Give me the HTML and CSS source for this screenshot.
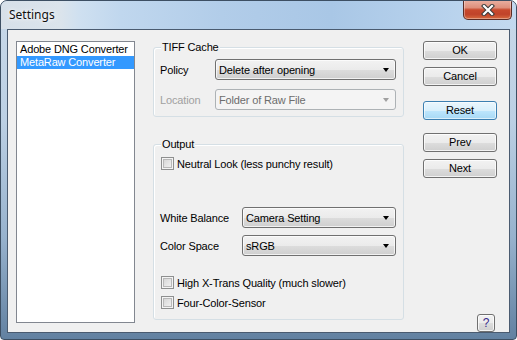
FILE: index.html
```html
<!DOCTYPE html>
<html>
<head>
<meta charset="utf-8">
<link rel="stylesheet" href="styles.css">
</head>
<body>
<div class="window">
  <div class="titlebar">
    <span class="title">Settings</span>
    <div class="close">
      <svg width="14" height="12" viewBox="0 0 14 12">
        <path d="M3 2 L11 10 M11 2 L3 10" stroke="#3a3a3a" stroke-width="4.2" stroke-linecap="square"/>
        <path d="M3 2 L11 10 M11 2 L3 10" stroke="#fff" stroke-width="2.2" stroke-linecap="square"/>
      </svg>
    </div>
  </div>
  <div class="client">
    <div class="listbox">
      <div class="item">Adobe DNG Converter</div>
      <div class="item sel">MetaRaw Converter</div>
    </div>
    <div class="main">
      <div class="group tiff">
        <div class="legend">TIFF Cache</div>
        <div class="row r1">
          <span class="lbl l1">Policy</span>
          <div class="combo c1"><span>Delete after opening</span><i class="arrow"></i></div>
        </div>
        <div class="row r2 disabled">
          <span class="lbl l1">Location</span>
          <div class="combo c1"><span>Folder of Raw File</span><i class="arrow"></i></div>
        </div>
      </div>
      <div class="group output">
        <div class="legend">Output</div>
        <label class="check c-neutral"><span class="cb"></span><span>Neutral Look (less punchy result)</span></label>
        <div class="row r-wb">
          <span class="lbl l2">White Balance</span>
          <div class="combo c2"><span>Camera Setting</span><i class="arrow"></i></div>
        </div>
        <div class="row r-cs">
          <span class="lbl l2">Color Space</span>
          <div class="combo c2"><span>sRGB</span><i class="arrow"></i></div>
        </div>
        <label class="check c-xtrans"><span class="cb"></span><span>High X-Trans Quality (much slower)</span></label>
        <label class="check c-four"><span class="cb"></span><span>Four-Color-Sensor</span></label>
      </div>
    </div>
    <div class="buttons">
      <div class="btn b-ok">OK</div>
      <div class="btn b-cancel">Cancel</div>
      <div class="btn b-reset focus">Reset</div>
      <div class="btn b-prev">Prev</div>
      <div class="btn b-next">Next</div>
      <div class="btn help">?</div>
    </div>
  </div>
</div>
</body>
</html>
```

FILE: styles.css
```css
html, body {
  margin: 0;
  padding: 0;
  background: #fff;
}
body {
  font-family: "Liberation Sans", Arial, sans-serif;
  font-size: 11px;
  letter-spacing: -0.15px;
  color: #000;
}
.window {
  width: 517px;
  height: 340px;
  box-sizing: border-box;
  border: 1px solid #3d4f63;
  border-radius: 7px 7px 4px 4px;
  padding: 0 6px 6px 6px;
  background: linear-gradient(to bottom, #c9d9e9 0%, #bcd0e4 35%, #97b2cd 70%, #6281a1 100%);
  display: flex;
  flex-direction: column;
  overflow: hidden;
}
.titlebar {
  height: 28px;
  margin: 0 -6px;
  display: flex;
  align-items: flex-start;
  background: linear-gradient(to right, #d7e0e9 0px, #dbe4ec 60px, #cfe0f0 78px, #c0d7ee 120px, #b2cde9 220px, #a9c7e6 330px, #b6d1ec 430px, #c3d9ef 517px);
  border-radius: 6px 6px 0 0;
}
.title {
  font-family: "Noto Sans", "Open Sans", sans-serif;
  font-size: 12px;
  letter-spacing: 0;
  line-height: 16px;
  margin: 6px 0 0 8px;
  color: #101010;
  text-shadow: 0 0 6px rgba(255,255,255,0.95), 0 0 3px rgba(255,255,255,0.9);
}
.close {
  margin: -1px 4px 0 auto;
  width: 47px;
  height: 19px;
  border: 1px solid #5b2c25;
  border-top: none;
  border-radius: 0 0 5px 5px;
  background: linear-gradient(to bottom, #eab1a3 0%, #df907c 40%, #c8492d 52%, #c0432a 75%, #d76a3e 100%);
  box-shadow: inset 0 0 0 1px rgba(255,255,255,0.35);
  display: flex;
  align-items: center;
  justify-content: center;
}
.client {
  flex: 1;
  border: 1px solid #4a5b70;
  background: #f0f0f0;
  display: flex;
  align-items: flex-start;
  padding: 11px 0 0 8px;
}
.listbox {
  width: 117px;
  height: 279px;
  border: 1px solid #828790;
  background: #fff;
  padding-top: 1px;
  box-sizing: content-box;
}
.item {
  height: 13px;
  line-height: 13px;
  padding-left: 3px;
  white-space: nowrap;
}
.item.sel {
  background: #3399ff;
  color: #fff;
}
.main {
  width: 251px;
  margin-left: 18px;
  padding-top: 6px;
}
.group {
  border: 1px solid #d5dfe5;
  border-radius: 3px;
  padding: 0 6px 0 6px;
  box-shadow: inset 1px 1px 0 #fff;
}
.tiff {
  height: 68px;
}
.output {
  margin-top: 27px;
  height: 174px;
}
.legend {
  display: table;
  margin: -7px 0 0 1px;
  padding: 0 1px;
  line-height: 13px;
  background: #f0f0f0;
}
.row {
  display: flex;
  align-items: center;
  height: 21px;
}
.r1 { margin-top: 5px; }
.r2 { margin-top: 9px; }
.r-wb { margin-top: 37px; }
.r-cs { margin-top: 7px; }
.lbl {
  white-space: nowrap;
}
.l1 { width: 55px; }
.l2 { width: 82px; }
.combo {
  box-sizing: border-box;
  height: 21px;
  border: 1px solid #707070;
  border-radius: 3px;
  background: linear-gradient(to bottom, #f2f2f2 0%, #ebebeb 50%, #dddddd 51%, #cfcfcf 100%);
  box-shadow: inset 0 0 0 1px rgba(255,255,255,0.7);
  display: flex;
  align-items: center;
  padding: 0 6px 0 3px;
  white-space: nowrap;
}
.c1 { width: 181px; }
.c2 { width: 154px; }
.combo span { flex: 1; }
.arrow {
  width: 0;
  height: 0;
  border-left: 3.5px solid transparent;
  border-right: 3.5px solid transparent;
  border-top: 4px solid #000;
}
.disabled .lbl { color: #a0a0a0; }
.disabled .combo {
  border-color: #adb2b5;
  background: #f4f4f4;
  box-shadow: none;
  color: #6d6d6d;
}
.disabled .arrow { border-top-color: #a0a0a0; }
.check {
  display: flex;
  align-items: center;
  height: 13px;
  margin-left: 1px;
  white-space: nowrap;
}
.c-neutral { margin-top: 6px; }
.c-xtrans { margin-top: 20px; }
.c-four { margin-top: 7px; }
.cb {
  box-sizing: border-box;
  width: 13px;
  height: 13px;
  border: 1px solid #8e8f8f;
  background: linear-gradient(135deg, #cfcfcf 0%, #e4e4e4 50%, #f6f6f6 100%);
  box-shadow: inset 0 0 0 1px #f4f4f4, inset 0 0 0 2px #b8b8b8;
  margin-right: 3px;
  flex: none;
}
.buttons {
  width: 74px;
  margin-left: 19px;
  height: 291px;
  display: flex;
  flex-direction: column;
}
.btn {
  box-sizing: border-box;
  height: 19px;
  line-height: 17px;
  text-align: center;
  border: 1px solid #707070;
  border-radius: 3px;
  background: linear-gradient(to bottom, #f2f2f2 0%, #ebebeb 50%, #dddddd 51%, #cfcfcf 100%);
  box-shadow: inset 0 0 0 1px rgba(255,255,255,0.75);
}
.b-cancel { margin-top: 7px; }
.b-reset { margin-top: 15px; }
.b-prev { margin-top: 13px; }
.b-next { margin-top: 7px; }
.btn.focus {
  border-color: #3c7fb1;
  background: linear-gradient(to bottom, #eaf6fd 0%, #d9f0fc 50%, #bee6fd 51%, #a7d9f5 100%);
  box-shadow: inset 0 0 0 1px rgba(255,255,255,0.6);
}
.help {
  margin-top: auto;
  align-self: flex-end;
  margin-right: 2px;
  width: 18px;
  height: 18px;
  line-height: 16px;
  font-size: 12px;
  color: #3a2a8c;
}
```
